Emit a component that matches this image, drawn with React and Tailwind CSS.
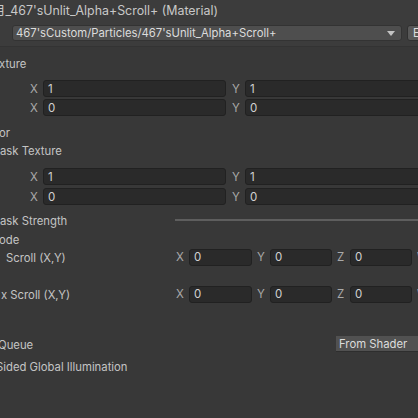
import React from 'react'

const font = { fontFamily: 'Inter, "Noto Sans CJK SC", sans-serif' }

function Field({ value, w }) {
  return (
    <div className={`${w} h-[17px] shrink-0 bg-[#2a2a2a] border border-[#212121] rounded-[3px] pl-[4px] pt-[2px] flex items-center text-[#d2d2d2] text-[11.5px] leading-none`}>
      {value}
    </div>
  )
}

function Axis({ children, w = 'w-[13px]' }) {
  return <span className={`${w} shrink-0 mt-[2px] text-[#a9a9a9] text-[11.5px] leading-none`}>{children}</span>
}

// X/Y pair row under a texture slot
function TilingRow({ value }) {
  return (
    <div className="h-[17px] flex items-center pl-[30px] shrink-0">
      <Axis>X</Axis>
      <Field value={value} w="w-[183px]" />
      <span className="w-[6px] shrink-0" />
      <Axis>Y</Axis>
      <Field value={value} w="w-[200px]" />
    </div>
  )
}

function Label({ text, h = 'h-[18px]', offset = 'ml-0' }) {
  return (
    <div className={`${h} flex items-center shrink-0 whitespace-nowrap`}>
      <span className={`${offset} mt-[4px] text-[#c4c4c4] text-[11.3px] leading-none`}>{text}</span>
    </div>
  )
}

function ScrollRow({ text, offset }) {
  return (
    <div className="h-[18px] flex items-center shrink-0 whitespace-nowrap">
      <span className={`w-[176px] shrink-0 ${offset} mt-[4px] text-[#c4c4c4] text-[11.3px] leading-none`}>{text}</span>
      <Axis>X</Axis>
      <Field value="0" w="w-[63px]" />
      <span className="w-[5px] shrink-0" />
      <Axis>Y</Axis>
      <Field value="0" w="w-[62px]" />
      <span className="w-[5px] shrink-0" />
      <Axis>Z</Axis>
      <Field value="0" w="w-[62px]" />
      <span className="w-[5px] shrink-0" />
      <Axis>W</Axis>
    </div>
  )
}

export default function App() {
  return (
    <div className="w-[418px] h-[418px] overflow-hidden bg-[#383838] flex flex-col" style={font}>
      {/* header */}
      <div className="h-[47px] shrink-0 bg-[#3c3c3c] border-b border-[#333333] flex flex-col">
        <div className="h-[21px] flex items-center whitespace-nowrap">
          <span className="ml-[-7px] mt-[2px] text-[#c8c8c8] text-[12.4px] leading-none">月_467'sUnlit_Alpha+Scroll+ (Material)</span>
        </div>
        <div className="mt-[4px] h-[16px] flex items-center">
          <div className="ml-[12px] w-[390px] h-[16px] shrink-0 bg-[#4e4e4e] border border-[#333333] rounded-[3px] flex items-center pl-[3px] pr-[6px] justify-between">
            <span className="mt-[2px] text-[#dcdcdc] text-[11.3px] leading-none whitespace-nowrap">467'sCustom/Particles/467'sUnlit_Alpha+Scroll+</span>
            <svg width="8" height="5" viewBox="0 0 8 5"><path d="M0 0h8L4 5z" fill="#c4c4c4" /></svg>
          </div>
          <div className="ml-[5px] w-[40px] h-[16px] shrink-0 bg-[#585858] border border-[#303030] rounded-[3px] flex items-center pl-[5px]">
            <span className="mt-[2px] text-[#dcdcdc] text-[11.3px] leading-none">Edit...</span>
          </div>
        </div>
      </div>

      {/* body */}
      <div className="flex flex-col">
        <div className="h-[7px]" />
        <Label text="xture" offset="ml-[-1px]" />
        <div className="h-[8px]" />
        <TilingRow value="1" />
        <div className="h-[2px]" />
        <TilingRow value="0" />

        <div className="h-[7px]" />
        <Label text="or" offset="ml-[-1px]" />
        <Label text="ask Texture" />
        <div className="h-[9px]" />
        <TilingRow value="1" />
        <div className="h-[3px]" />
        <TilingRow value="0" />

        <div className="h-[6px]" />
        <div className="h-[18px] flex items-center shrink-0 whitespace-nowrap">
          <span className="w-[175px] shrink-0 mt-[4px] text-[#c4c4c4] text-[11.3px] leading-none">ask Strength</span>
          <div className="flex-1 h-[2px] bg-[#5e5e5e]" />
        </div>
        <Label text="ode" h="h-[19px]" offset="ml-[-1px]" />
        <ScrollRow text=" Scroll (X,Y)" offset="pl-[6px]" />
        <div className="h-[19px]" />
        <ScrollRow text="x Scroll (X,Y)" offset="pl-[1px]" />

        <div className="h-[33px]" />
        <div className="h-[16px] flex items-center shrink-0 whitespace-nowrap">
          <span className="w-[338px] shrink-0 ml-[-2px] mt-[4px] text-[#c4c4c4] text-[11.3px] leading-none">Queue</span>
          <div className="w-[100px] h-[16px] shrink-0 bg-[#515151] border-b border-[#2e2e2e] flex items-center pl-[3px]">
            <span className="mt-[2px] text-[#dcdcdc] text-[11.3px] leading-none">From Shader</span>
          </div>
        </div>
        <div className="h-[5px]" />
        <Label text="Sided Global Illumination" offset="ml-[-4px]" />
      </div>
    </div>
  )
}
